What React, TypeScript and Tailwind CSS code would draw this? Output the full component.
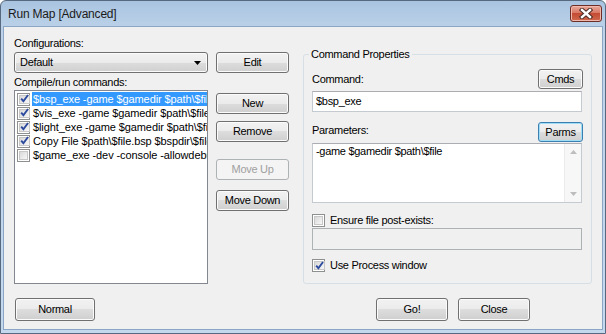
import React from "react";
import clsx from "clsx";

const commands = [
  { text: "$bsp_exe -game $gamedir $path\\$file", checked: true, selected: true },
  { text: "$vis_exe -game $gamedir $path\\$file", checked: true },
  { text: "$light_exe -game $gamedir $path\\$file", checked: true },
  { text: "Copy File $path\\$file.bsp $bspdir\\$file.bsp", checked: true },
  { text: "$game_exe -dev -console -allowdebug +map $file", checked: false },
];

const Check = ({ checked }: { checked?: boolean }) => (
  <span className="w-[13px] h-[13px] shrink-0 border border-[#8e8f8f] bg-white p-[1px] flex">
    <span className="flex-1 flex items-center justify-center border border-[#c7c7c7] bg-[linear-gradient(135deg,#d9d9d9,#f7f7f7)]">
      {checked && (
        <svg width="9" height="9" viewBox="0 0 9 9" className="-mt-[1px]">
          <path d="M1.2 4.6 L3.4 7.2 L8 1" fill="none" stroke="#2c4a9e" strokeWidth="1.9" />
        </svg>
      )}
    </span>
  </span>
);

interface BtnProps {
  children: React.ReactNode;
  className?: string;
  disabled?: boolean;
  focused?: boolean;
}

const Btn = ({ children, className, disabled, focused }: BtnProps) => (
  <div
    className={clsx(
      "flex items-center justify-center rounded-[3px] border text-[11px] leading-none",
      disabled
        ? "border-[#adb2b5] bg-[#f4f4f4] text-[#a0a0a0]"
        : focused
          ? "border-[#3c7fb1] bg-[linear-gradient(to_bottom,#f2f2f2_0%,#ebebeb_50%,#dddddd_50%,#cfcfcf_100%)] shadow-[inset_0_0_0_1px_#9fdcf6]"
          : "border-[#707070] bg-[linear-gradient(to_bottom,#f2f2f2_0%,#ebebeb_50%,#dddddd_50%,#cfcfcf_100%)] shadow-[inset_0_0_0_1px_#fbfbfb]",
      className
    )}
  >
    {children}
  </div>
);

const Label = ({ children, className }: { children: React.ReactNode; className?: string }) => (
  <div className={clsx("h-[13px] leading-[13px] text-[11px]", className)}>{children}</div>
);

export default function App() {
  return (
    <div className="w-[606px] h-[334px] flex flex-col border border-[#56697f] rounded-t-[6px] bg-[linear-gradient(to_bottom,#a9c4e0,#bed3ea_30px,#c4d9ee)] text-black font-['Liberation_Sans',Arial,sans-serif] tracking-[-0.3px] overflow-hidden">
      {/* title bar */}
      <div className="h-[25px] flex items-center pl-[7px] pr-[3px]">
        <span className="text-[12px] text-[#1b1b1b] flex-1 tracking-[-0.2px]">Run Map [Advanced]</span>
        <div className="w-[32px] h-[17px] -mt-[1px] rounded-[3px] border border-[#6e2d26] bg-[linear-gradient(to_bottom,#e9a99c,#d8735f_50%,#c44b34_50%,#cf6a4f)] shadow-[inset_0_0_0_1px_#f0b9ad] flex items-center justify-center">
          <svg width="14" height="11" viewBox="0 0 14 11">
            <path d="M3 2 L11 9 M11 2 L3 9" stroke="#4a2a24" strokeWidth="4.4" strokeLinecap="square" />
            <path d="M3 2 L11 9 M11 2 L3 9" stroke="#ffffff" strokeWidth="2.4" strokeLinecap="square" />
          </svg>
        </div>
      </div>

      {/* client area */}
      <div className="flex-1 ml-[2px] mr-[2px] mb-[3px] border border-[#8ba6c4] bg-[#f0f0f0] flex flex-col">
        <div className="flex pl-[10px] pt-[10px]">
          {/* left column */}
          <div className="w-[194px] flex flex-col">
            <Label>Configurations:</Label>
            <div className="mt-[2px] h-[21px] rounded-[3px] border border-[#707070] bg-[linear-gradient(to_bottom,#f2f2f2_0%,#ebebeb_50%,#dddddd_50%,#cfcfcf_100%)] shadow-[inset_0_0_0_1px_#fbfbfb] flex items-center pl-[5px] pr-[6px] text-[11px]">
              <span className="flex-1">Default</span>
              <svg width="7" height="4" viewBox="0 0 7 4">
                <path d="M0 0 H7 L3.5 4 Z" fill="#000" />
              </svg>
            </div>
            <Label className="mt-[3px]">Compile/run commands:</Label>
            <div className="mt-[1px] h-[194px] border border-[#828790] bg-white pt-[1px] overflow-hidden">
              {commands.map((c) => (
                <div key={c.text} className="h-[14px] flex items-center pl-[2px] text-[11px] whitespace-nowrap tracking-[-0.1px]">
                  <Check checked={c.checked} />
                  <span
                    className={clsx(
                      "ml-[2px] pl-[1px] h-[14px] leading-[14px] flex-1",
                      c.selected ? "bg-[#3399ff] text-white" : ""
                    )}
                  >
                    {c.text}
                  </span>
                </div>
              ))}
            </div>
          </div>

          {/* middle buttons */}
          <div className="ml-[8px] w-[73px] flex flex-col pt-[15px]">
            <Btn className="h-[21px]">Edit</Btn>
            <Btn className="h-[21px] mt-[20px]">New</Btn>
            <Btn className="h-[21px] mt-[7px]">Remove</Btn>
            <Btn className="h-[21px] mt-[17px]" disabled>
              Move Up
            </Btn>
            <Btn className="h-[21px] mt-[10px]">Move Down</Btn>
          </div>

          {/* command properties */}
          <fieldset className="ml-[14px] mt-[11px] w-[289px] h-[236px] border border-[#d5dfe5] rounded-[3px] pl-[8px] pr-[9px] flex flex-col">
            <legend className="-ml-[3px] px-[2px] text-[11px] leading-[13px]">Command Properties</legend>
            <div className="mt-[8px] h-[20px] flex items-center justify-between">
              <span className="text-[11px]">Command:</span>
              <Btn className="w-[45px] h-[20px] -mr-[1px]">Cmds</Btn>
            </div>
            <div className="mt-[2px] h-[21px] border border-[#c5cad0] border-t-[#abadb3] bg-white flex items-center pl-[3px] text-[11px]">
              $bsp_exe
            </div>
            <div className="mt-[10px] h-[20px] flex items-center justify-between">
              <span className="text-[11px] -mt-[3px]">Parameters:</span>
              <Btn className="w-[45px] h-[20px] -mr-[1px]" focused>
                Parms
              </Btn>
            </div>
            <div className="mt-[1px] h-[60px] border border-[#c5cad0] border-t-[#abadb3] bg-white flex text-[11px]">
              <div className="flex-1 pl-[3px] pt-[1px] leading-[13px]">-game $gamedir $path\$file</div>
              <div className="w-[17px] bg-[#f7f7f7] border-l border-[#eaeaea] flex flex-col items-center justify-between py-[6px]">
                <svg width="7" height="4" viewBox="0 0 7 4">
                  <path d="M0 4 H7 L3.5 0 Z" fill="#bdbdbd" />
                </svg>
                <svg width="7" height="4" viewBox="0 0 7 4">
                  <path d="M0 0 H7 L3.5 4 Z" fill="#bdbdbd" />
                </svg>
              </div>
            </div>
            <div className="mt-[11px] h-[13px] flex items-center gap-[5px] text-[11px]">
              <Check />
              <span>Ensure file post-exists:</span>
            </div>
            <div className="mt-[1px] h-[22px] border border-[#adb2b5] bg-[#f0f0f0]" />
            <div className="mt-[9px] h-[13px] flex items-center gap-[5px] text-[11px]">
              <Check checked />
              <span>Use Process window</span>
            </div>
          </fieldset>
        </div>

        {/* bottom buttons */}
        <div className="flex pl-[11px] mt-[14px]">
          <Btn className="w-[80px] h-[23px]">Normal</Btn>
          <Btn className="w-[72px] h-[23px] ml-[281px]">Go!</Btn>
          <Btn className="w-[72px] h-[23px] ml-[10px]">Close</Btn>
        </div>
      </div>
    </div>
  );
}
